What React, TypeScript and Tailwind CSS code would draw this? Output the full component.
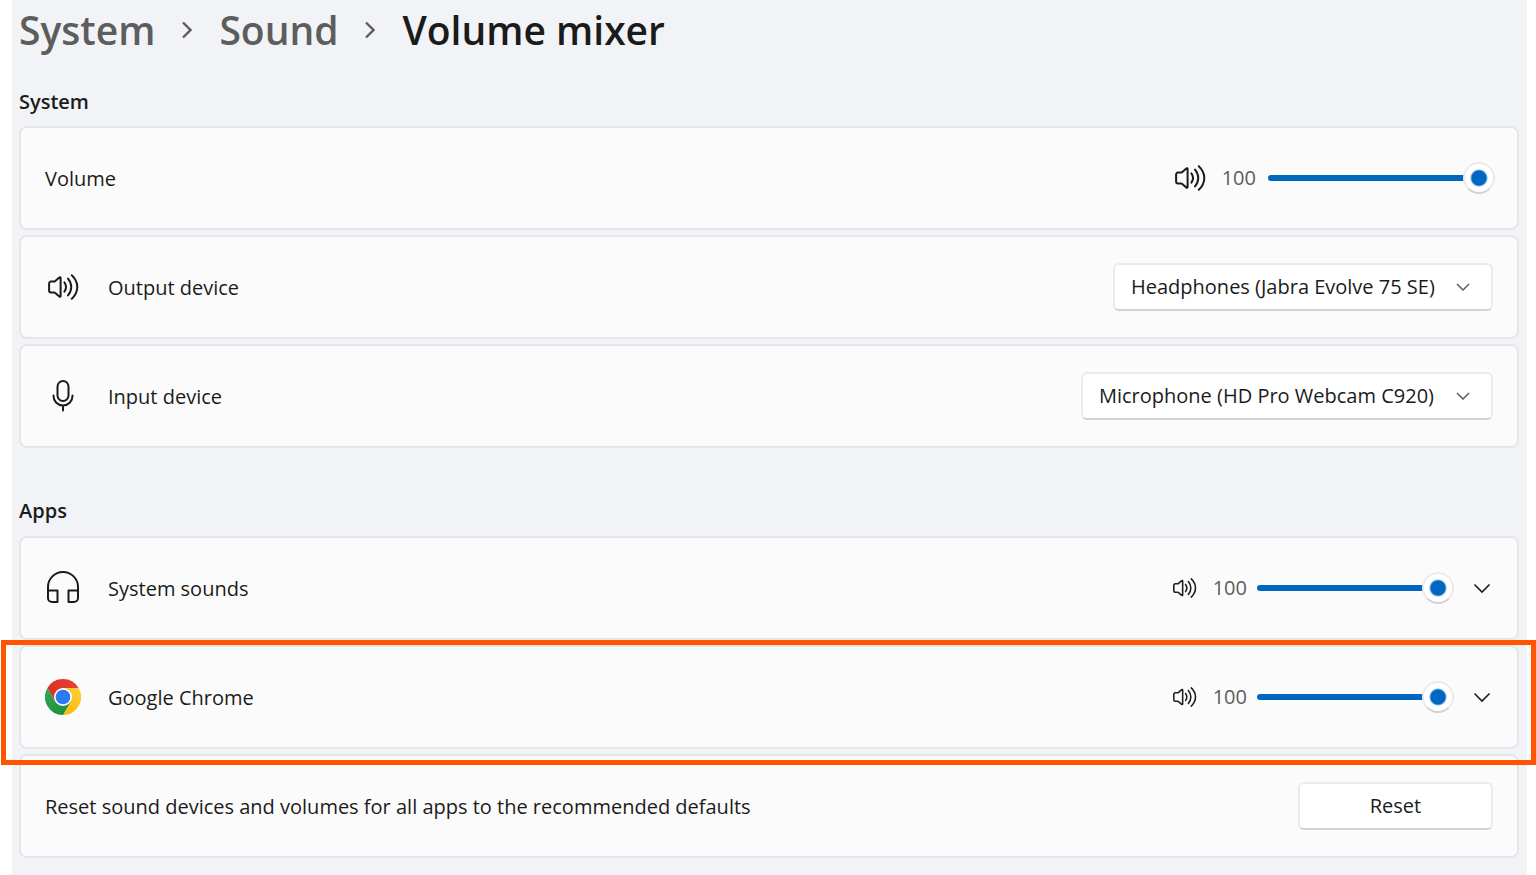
import React, { useState } from 'react';

const SpeakerIcon = ({ className }: { className: string }) => (
  <svg viewBox="0 0 32 26" fill="none" stroke="currentColor" strokeWidth="2" strokeLinecap="round" strokeLinejoin="round" className={className} aria-hidden="true">
    <path d="M4 7.6h2.800c.6 0 1.100-.2 1.500-.6l4-3.500c.5-.5 1.300-.2 1.300.5v18c0 .7-.8 1-1.300.5l-4-3.500c-.4-.4-.9-.6-1.500-.6H4c-1.100 0-1.900-.8-1.900-1.900V9.500c0-1.100.8-1.900 1.900-1.900z" />
    <path d="M17.400 8.400c2 2.800 2 6.400 0 9.200" />
    <path d="M21 4.600c4.300 5 4.300 11.800 0 16.800" />
    <path d="M24.800 1.200c7.300 7 7.300 16.600 0 23.600" />
  </svg>
);

const MicIcon = () => (
  <svg viewBox="0 0 36 36" fill="none" stroke="currentColor" strokeWidth="2" strokeLinecap="round" className="size-9" aria-hidden="true">
    <rect x="12.500" y="3" width="11" height="20" rx="5.500" />
    <path d="M8.500 17.500v.5a9.500 9.500 0 0 0 19 0v-.5M18 27.500v5" />
  </svg>
);

const HeadphonesIcon = () => (
  <svg viewBox="0 0 36 36" fill="none" stroke="currentColor" strokeWidth="2" strokeLinejoin="round" className="size-9" aria-hidden="true">
    <path d="M3 20.500V17a15 15 0 0 1 30 0v3.500" />
    <path d="M3 20.500h9.500V32H7a4 4 0 0 1-4-4zM33 20.500h-9.500V32H29a4 4 0 0 0 4-4z" />
  </svg>
);

const ChromeIcon = () => (
  <svg viewBox="0 0 48 48" className="size-9" aria-hidden="true">
    <defs>
      <linearGradient id="chrome-red" x1="3.200" y1="15" x2="44.800" y2="15" gradientUnits="userSpaceOnUse">
        <stop stopColor="#d93025" />
        <stop offset="1" stopColor="#ea4335" />
      </linearGradient>
      <linearGradient id="chrome-yellow" x1="21" y1="47.700" x2="41.800" y2="11.700" gradientUnits="userSpaceOnUse">
        <stop stopColor="#fcb900" />
        <stop offset="1" stopColor="#fccc3c" />
      </linearGradient>
      <linearGradient id="chrome-green" x1="26.600" y1="46.500" x2="5.800" y2="10.500" gradientUnits="userSpaceOnUse">
        <stop stopColor="#1e8e3e" />
        <stop offset="1" stopColor="#34a853" />
      </linearGradient>
    </defs>
    <path fill="url(#chrome-red)" d="M3.215 12A24 24 0 0 1 44.785 12H24L13.608 30z" />
    <path fill="url(#chrome-yellow)" d="M44.785 12A24 24 0 0 1 24 48L34.392 30 24 12z" />
    <path fill="url(#chrome-green)" d="M3.215 12A24 24 0 0 0 24 48L34.392 30H13.608z" />
    <circle cx="24" cy="24" r="12" fill="#fff" />
    <circle cx="24" cy="24" r="9.800" fill="#2b7af0" />
  </svg>
);

const BreadcrumbChevron = () => (
  <svg viewBox="0 0 10 18" fill="none" stroke="#5d5d5d" strokeWidth="2.300" className="h-[18px] w-[10px]" aria-hidden="true">
    <path d="M1 1.500 8.500 9 1 16.500" />
  </svg>
);

const VolumeSlider = ({ label, className }: { label: string; className: string }) => {
  const [value, setValue] = useState(100);

  return (
    <>
      <span className="text-[#5d5d5d]">{value}</span>
      <input
        type="range"
        min={0}
        max={100}
        value={value}
        aria-label={label}
        onChange={(e) => setValue(Number(e.target.value))}
        style={{ backgroundImage: `linear-gradient(to right, #0067c0 ${value}%, #868686 ${value}%)` }}
        className={`h-[6px] appearance-none rounded-full [&::-webkit-slider-thumb]:size-8 [&::-webkit-slider-thumb]:appearance-none [&::-webkit-slider-thumb]:rounded-full [&::-webkit-slider-thumb]:border-2 [&::-webkit-slider-thumb]:border-[#ebebeb] [&::-webkit-slider-thumb]:border-b-[#d2d2d2] [&::-webkit-slider-thumb]:bg-[radial-gradient(circle,#0067c0_7px,#ffffff_9px)] ${className}`}
      />
    </>
  );
};

const DeviceSelect = ({ id, option, className }: { id: string; option: string; className: string }) => (
  <div className="relative">
    <select
      id={id}
      className={`h-12 appearance-none rounded-md border-2 border-[#ebebeb] border-b-[#d2d2d2] bg-white pl-4 ${className}`}
    >
      <option>{option}</option>
    </select>
    <svg viewBox="0 0 14 8" fill="none" stroke="#5d5d5d" strokeWidth="1.500" className="pointer-events-none absolute top-5 right-[23px] h-2 w-[14px]" aria-hidden="true">
      <path d="M1 1l6 6 6-6" />
    </svg>
  </div>
);

const Card = ({ children }: { children: React.ReactNode }) => (
  <div className="flex h-[104px] items-center rounded-lg border-2 border-[#e5e6ea] bg-[#fbfbfb] px-6">{children}</div>
);

const AppRow = ({ icon, name }: { icon: React.ReactNode; name: string }) => (
  <Card>
    {icon}
    <span className="ml-[27px] pt-0.5">{name}</span>
    <SpeakerIcon className="mr-4 ml-auto h-5 w-[25px]" />
    <VolumeSlider label={`${name} volume`} className="ml-[10px] w-[197px]" />
    <button type="button" aria-label={`Show ${name} options`} className="ml-[19px]">
      <svg viewBox="0 0 20 20" fill="none" stroke="currentColor" strokeWidth="1.600" className="size-5" aria-hidden="true">
        <path d="M1.500 6.500l7.500 7.500 7.500-7.500" />
      </svg>
    </button>
  </Card>
);

const App = () => {
  return (
    <div className="min-h-screen bg-white pr-[9px] pl-3 font-['Open_Sans',sans-serif] text-[20px] leading-7 text-[#1b1b1b]">
      <main className="min-h-screen bg-[#f1f3f7] pr-2 pl-[7px]">
        <nav aria-label="Breadcrumb" className="flex h-[60px] items-center gap-[27px] text-[39px] font-semibold">
          <a href="#system" className="text-[#5d5d5d]">System</a>
          <BreadcrumbChevron />
          <a href="#sound" className="text-[#5d5d5d]">Sound</a>
          <BreadcrumbChevron />
          <h1>Volume mixer</h1>
        </nav>

        {/* System */}
        <section className="pt-7">
          <h2 className="font-semibold">System</h2>
          <div className="mt-[10px] flex flex-col gap-[5px]">
            <Card>
              <span className="pt-0.5">Volume</span>
              <SpeakerIcon className="mr-4 ml-auto h-[26px] w-8" />
              <VolumeSlider label="Volume" className="-mr-0.5 ml-3 w-[227px]" />
            </Card>
            <Card>
              <span className="flex w-9 justify-center">
                <SpeakerIcon className="h-[26px] w-8" />
              </span>
              <label htmlFor="output-device" className="mr-auto ml-[27px] pt-0.5">Output device</label>
              <DeviceSelect id="output-device" option="Headphones (Jabra Evolve 75 SE)" className="w-[380px]" />
            </Card>
            <Card>
              <MicIcon />
              <label htmlFor="input-device" className="mr-auto ml-[27px] pt-0.5">Input device</label>
              <DeviceSelect id="input-device" option="Microphone (HD Pro Webcam C920)" className="w-[412px]" />
            </Card>
          </div>
        </section>

        {/* Apps */}
        <section className="pt-[49px] pb-[17px]">
          <h2 className="font-semibold">Apps</h2>
          <div className="mt-[11px] flex flex-col gap-[5px]">
            <AppRow icon={<HeadphonesIcon />} name="System sounds" />
            <div className="relative">
              <AppRow icon={<ChromeIcon />} name="Google Chrome" />
              <div className="pointer-events-none absolute -top-[5px] -right-[17px] -bottom-4 -left-[18px] border-[5px] border-[#ff5500]" />
            </div>
            <Card>
              <span className="pt-0.5">Reset sound devices and volumes for all apps to the recommended defaults</span>
              <button type="button" className="ml-auto h-12 w-[195px] rounded-md border-2 border-[#ebebeb] border-b-[#d2d2d2] bg-white">
                Reset
              </button>
            </Card>
          </div>
        </section>
      </main>
    </div>
  );
};

export default App;
